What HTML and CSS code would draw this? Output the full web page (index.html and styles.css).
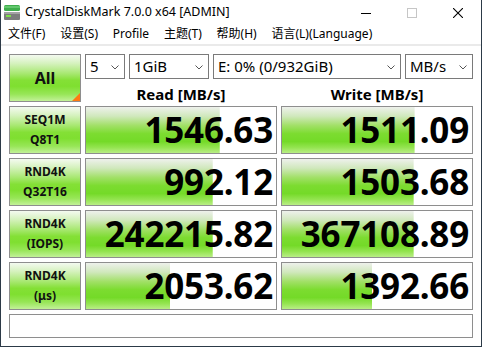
FILE: index.html
```html
<!DOCTYPE html>
<html lang="zh-CN">
<head>
<meta charset="utf-8">
<title>CrystalDiskMark 7.0.0 x64 [ADMIN]</title>
<link rel="stylesheet" href="styles.css">
</head>
<body>
<div class="window">
  <div class="titlebar">
    <svg class="appicon" width="16" height="15" viewBox="0 0 16 15">
      <rect x="0" y="0" width="16" height="6" rx="1.5" fill="#3fae4c"/>
      <rect x="0" y="1" width="16" height="2" fill="#63c76e"/>
      <rect x="0" y="7" width="16" height="8" rx="1" fill="#7d7d7d"/>
      <rect x="0" y="7" width="16" height="2" fill="#a4a4a4"/>
      <rect x="2" y="10" width="5" height="2" fill="#7ee04a"/>
    </svg>
    <span class="title">CrystalDiskMark 7.0.0 x64 [ADMIN]</span>
    <div class="controls">
      <span class="ctl"><svg width="10" height="10" viewBox="0 0 10 10"><line x1="0" y1="5.5" x2="10" y2="5.5" stroke="#000" stroke-width="1"/></svg></span>
      <span class="ctl"><svg width="10" height="10" viewBox="0 0 10 10"><rect x="0.5" y="0.5" width="9" height="9" fill="none" stroke="#c6c6c6" stroke-width="1"/></svg></span>
      <span class="ctl"><svg width="10" height="10" viewBox="0 0 10 10"><path d="M0 0 L10 10 M10 0 L0 10" stroke="#000" stroke-width="1.1"/></svg></span>
    </div>
  </div>
  <div class="menubar">
    <span class="menu">文件(F)</span>
    <span class="menu">设置(S)</span>
    <span class="menu">Profile</span>
    <span class="menu">主题(T)</span>
    <span class="menu">帮助(H)</span>
    <span class="menu">语言(L)(Language)</span>
  </div>
  <div class="client">
    <div class="grid">
      <div class="label all">All<span class="corner"></span></div>
      <div class="topright">
        <div class="selects">
          <div class="select s-count"><span>5</span><svg class="chev" width="8" height="5" viewBox="0 0 8 5"><polyline points="0.5,0.5 4,4 7.5,0.5" fill="none" stroke="#555" stroke-width="1"/></svg></div>
          <div class="select s-size"><span>1GiB</span><svg class="chev" width="8" height="5" viewBox="0 0 8 5"><polyline points="0.5,0.5 4,4 7.5,0.5" fill="none" stroke="#555" stroke-width="1"/></svg></div>
          <div class="select s-drive"><span>E: 0% (0/932GiB)</span><svg class="chev" width="8" height="5" viewBox="0 0 8 5"><polyline points="0.5,0.5 4,4 7.5,0.5" fill="none" stroke="#555" stroke-width="1"/></svg></div>
          <div class="select s-unit"><span>MB/s</span><svg class="chev" width="8" height="5" viewBox="0 0 8 5"><polyline points="0.5,0.5 4,4 7.5,0.5" fill="none" stroke="#555" stroke-width="1"/></svg></div>
        </div>
        <div class="heads">
          <div class="head">Read [MB/s]</div>
          <div class="head">Write [MB/s]</div>
        </div>
      </div>

      <div class="label"><span>SEQ1M</span><span>Q8T1</span></div>
      <div class="value" style="background-size: 70.4% 100%">1546.63</div>
      <div class="value" style="background-size: 69.8% 100%">1511.09</div>

      <div class="label"><span>RND4K</span><span>Q32T16</span></div>
      <div class="value" style="background-size: 66.7% 100%">992.12</div>
      <div class="value" style="background-size: 69.3% 100%">1503.68</div>

      <div class="label"><span>RND4K</span><span>(IOPS)</span></div>
      <div class="value" style="background-size: 66.7% 100%">242215.82</div>
      <div class="value" style="background-size: 69.3% 100%">367108.89</div>

      <div class="label"><span>RND4K</span><span>(μs)</span></div>
      <div class="value" style="background-size: 44.4% 100%">2053.62</div>
      <div class="value" style="background-size: 47.6% 100%">1392.66</div>
    </div>
    <div class="status"></div>
  </div>
</div>
</body>
</html>
```
FILE: styles.css
```css
* { box-sizing: border-box; }
html, body { margin: 0; padding: 0; background: #fff; }
body {
  font-family: "Segoe UI", "Noto Sans", "Noto Sans CJK SC", sans-serif;
  color: #000;
}
.window {
  width: 482px;
  height: 347px;
  border-left: 1px solid #2c3a47;
  border-right: 1px solid #2c3a47;
  border-bottom: 1px solid #2c3a47;
  background: #fff;
  display: flex;
  flex-direction: column;
}
.titlebar {
  height: 24px;
  display: flex;
  align-items: center;
  background: #fff;
}
.appicon { margin-left: 3px; margin-top: 1px; }
.title {
  margin-left: 5px;
  font-size: 12.5px;
  line-height: 24px;
  color: #000;
}
.controls { margin-left: auto; display: flex; height: 24px; }
.ctl {
  width: 46px;
  height: 24px;
  display: flex;
  align-items: center;
  justify-content: center;
}
.ctl svg { display: block; margin-top: 2px; }
.menubar {
  height: 20px;
  display: flex;
  align-items: center;
  font-family: "Segoe UI", "Noto Sans", "Noto Sans CJK SC", sans-serif;
  font-size: 12px;
  border-bottom: 2px solid #eaeaea;
  box-sizing: content-box;
}
.menu { padding: 0 7.4px; line-height: 20px; }
.menu:first-child { padding-left: 7px; }
.client {
  flex: 1;
  padding: 8px 8px 8px 8px;
  display: flex;
  flex-direction: column;
  gap: 4px;
}
.grid {
  display: grid;
  grid-template-columns: 72px 192px 192px;
  grid-auto-rows: 48px;
  column-gap: 4px;
  row-gap: 4px;
}
.label {
  border: 1px solid #8e8e8e;
  background: linear-gradient(to bottom, #f4faf0 0%, #d6f2bf 18%, #a8e872 40%, #84e036 55%, #7fdf30 68%, #97e657 85%, #c2f198 100%);
  display: flex;
  flex-direction: column;
  align-items: center;
  justify-content: center;
  font-weight: bold;
  font-size: 12px;
  line-height: 20px;
  color: #111;
}
.all {
  position: relative;
  font-size: 16px;
}
.corner {
  position: absolute;
  right: 0;
  bottom: 0;
  width: 0;
  height: 0;
  border-style: solid;
  border-width: 0 0 8px 8px;
  border-color: transparent transparent #ff7a12 transparent;
}
.topright {
  grid-column: 2 / 4;
  display: flex;
  flex-direction: column;
}
.selects {
  height: 25px;
  display: flex;
  gap: 4px;
}
.select {
  border: 1px solid #7a7a7a;
  background: #fff;
  height: 25px;
  display: flex;
  align-items: center;
  justify-content: space-between;
  padding: 0 5px 0 4px;
  font-size: 15px;
}
.select span { line-height: 23px; }
.chev { display: block; margin-top: 1px; }
.s-count { width: 40px; }
.s-size { width: 80px; }
.s-drive { width: 188px; }
.s-unit { flex: 1; }
.heads {
  flex: 1;
  display: grid;
  grid-template-columns: 192px 192px;
  column-gap: 4px;
  align-items: center;
}
.head {
  text-align: center;
  font-weight: bold;
  font-size: 15px;
  line-height: 20px;
  padding-top: 5px;
}
.value {
  border: 1px solid #8e8e8e;
  background-color: #fff;
  background-image: linear-gradient(to bottom, #eef1ec 0%, #d0e8bc 20%, #a2e068 40%, #7cdc30 58%, #74da28 75%, #94e450 88%, #b9ee86 100%);
  background-repeat: no-repeat;
  background-position: left top;
  display: flex;
  align-items: center;
  justify-content: flex-end;
  padding-right: 3px;
  font-weight: bold;
  font-size: 35px;
  line-height: 46px;
  letter-spacing: -0.2px;
}
.status {
  height: 24px;
  border: 1px solid #8e8e8e;
  background: #fff;
}
```
